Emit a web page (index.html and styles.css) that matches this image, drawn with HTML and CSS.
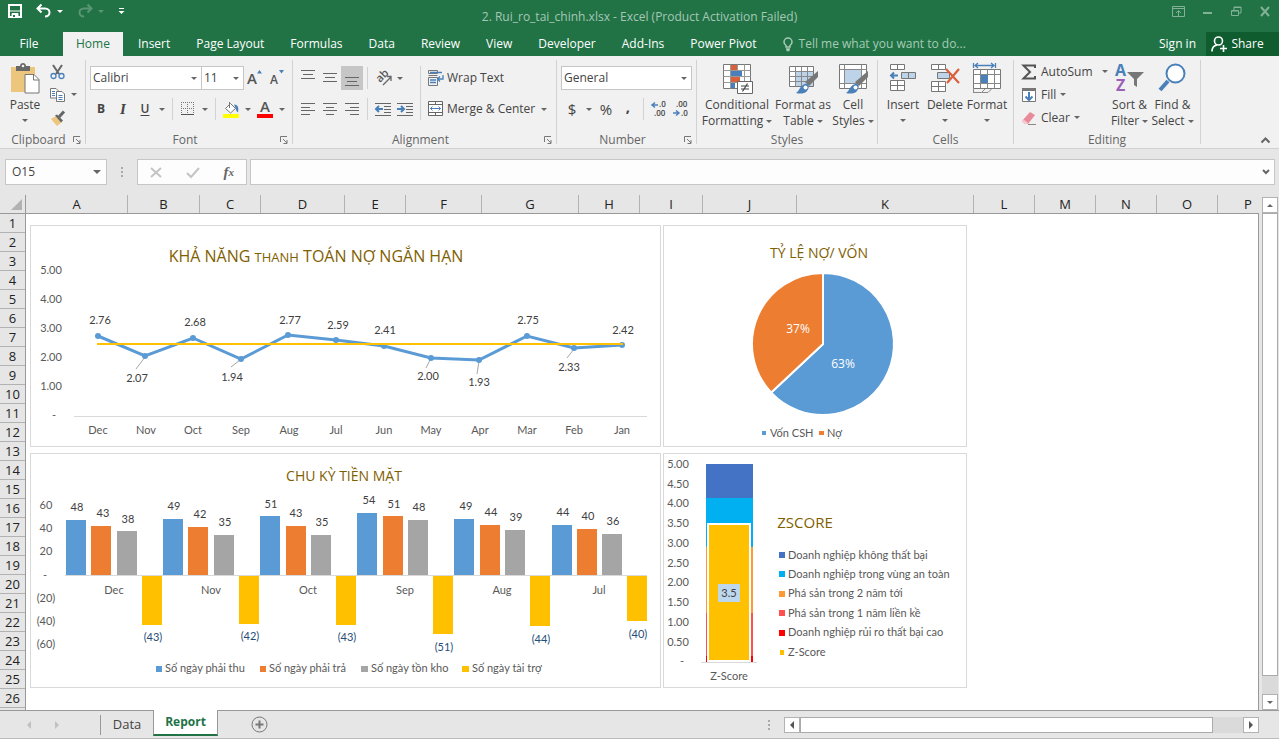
FILE: index.html
```html
<!DOCTYPE html>
<html lang="vi">
<head>
  <meta charset="UTF-8">
  <title>2. Rui_ro_tai_chinh.xlsx - Excel</title>
  <link rel="stylesheet" href="styles.css">
</head>
<body>
  <header class="titlebar">
    <div class="quick">
      <button class="qbtn" aria-label="Save"><svg width="14" height="14" viewBox="0 0 14 14"><path d="M1 1h12v12H1z" fill="none" stroke="#fff" stroke-width="2"/><path d="M2 7h10M4 9.5h6V13H4z" stroke="#fff" fill="#fff"/><path d="M5 11h2v2H5z" fill="#217346"/></svg></button>
      <button class="qbtn" aria-label="Undo"><svg width="16" height="14" viewBox="0 0 16 14"><path d="M5.500 0.500L1.500 4.500l4 4M2 4.500h7c6 0 6 8 0 8" fill="none" stroke="#fff" stroke-width="2"/></svg><i class="caret white"></i></button>
      <button class="qbtn dim" aria-label="Redo"><svg width="16" height="14" viewBox="0 0 16 14"><path d="M10.500 0.500l4 4-4 4M14 4.500H7c-6 0-6 8 0 8" fill="none" stroke="#fff" stroke-width="2"/></svg><i class="caret white"></i></button>
      <button class="qbtn" aria-label="Customize"><svg width="7" height="8" viewBox="0 0 7 8"><path d="M1 1.500h5" stroke="#fff"/><path d="M0.500 4h6l-3 3z" fill="#fff"/></svg></button>
    </div>
    <div class="doc-title">2. Rui_ro_tai_chinh.xlsx - Excel (Product Activation Failed)</div>
    <div class="window-btns">
      <button aria-label="Ribbon options"><svg width="13" height="11" viewBox="0 0 13 11"><path d="M.5.5h12v10H.5zM.5 2.500h12M6.500 10V5M4 7l2.500-2.500L9 7" fill="none" stroke="#82b197"/></svg></button>
      <button aria-label="Minimize"><svg width="10" height="11" viewBox="0 0 10 11"><path d="M0 7h9" stroke="#82b197" stroke-width="2"/></svg></button>
      <button aria-label="Restore"><svg width="11" height="11" viewBox="0 0 11 11"><path d="M.5 4.500h7v5h-7zM.5 5h7M3 4V1h7v6H8M3 1.500h7" fill="none" stroke="#82b197"/></svg></button>
      <button aria-label="Close"><svg width="10" height="11" viewBox="0 0 10 11"><path d="M1 1l8 9M9 1l-8 9" stroke="#82b197" stroke-width="2"/></svg></button>
    </div>
  </header>

  <nav class="tabs">
    <button class="tab file">File</button>
    <button class="tab active">Home</button>
    <button class="tab">Insert</button>
    <button class="tab">Page Layout</button>
    <button class="tab">Formulas</button>
    <button class="tab">Data</button>
    <button class="tab">Review</button>
    <button class="tab">View</button>
    <button class="tab">Developer</button>
    <button class="tab">Add-Ins</button>
    <button class="tab">Power Pivot</button>
    <button class="tab tell"><svg width="10" height="14" viewBox="0 0 10 14"><path d="M3 10V8.500C1.500 7.500 1 6.500 1 5a4 4 0 0 1 8 0c0 1.500-.5 2.500-2 3.500V10zM3 12h4M3.500 13.500h3" fill="none" stroke="#a6cbb5" stroke-width="1.500"/></svg>Tell me what you want to do...</button>
    <a class="signin" href="#">Sign in</a>
    <button class="share"><svg width="16" height="16" viewBox="0 0 16 16"><circle cx="7.500" cy="5" r="4" fill="none" stroke="#fff" stroke-width="1.600"/><path d="M1 15.500c0-4 2-6 5-6.500M9 12.500h7M12.500 9v7" fill="none" stroke="#fff" stroke-width="1.600"/></svg>Share</button>
  </nav>

  <section class="ribbon">
    <div class="group g-clipboard">
      <div class="group-body">
        <button class="big paste">
          <svg width="30" height="32" viewBox="0 0 30 32"><path d="M1 5h24v25H1z" fill="#edc67d"/><path d="M6 4h4c0-4 6-4 6 0h4v5H6z" fill="#686868"/><circle cx="13" cy="4" r="1.300" fill="#f1f1f1"/><path d="M15 12.500h9l5 5V31H15z" fill="#fff" stroke="#777"/><path d="M23.500 12.500V18H29" fill="none" stroke="#777"/></svg>
          <span>Paste</span><i class="caret"></i>
        </button>
        <div class="stack clip-stack">
          <button class="row-btn" aria-label="Cut"><svg width="15" height="16" viewBox="0 0 15 16"><path d="M3 1l6 9M12 1L6 10" stroke="#666" stroke-width="2"/><circle cx="3.500" cy="12" r="2.500" fill="none" stroke="#4a80ba" stroke-width="1.300"/><circle cx="11.500" cy="12" r="2.500" fill="none" stroke="#4a80ba" stroke-width="1.300"/></svg></button>
          <button class="row-btn" aria-label="Copy"><svg width="15" height="16" viewBox="0 0 15 16"><path d="M.5 1.500H6l2 2V11H.5z" fill="#fff" stroke="#777"/><path d="M6.500 4.500H12l2.500 2.500v7.500h-8z" fill="#fff" stroke="#777"/><path d="M2 4.500h3M2 6.500h3M2 8.500h3M8.500 8.500h4M8.500 10.500h4M8.500 12.500h4" stroke="#4a80ba"/></svg><i class="caret"></i></button>
          <button class="row-btn" aria-label="Format Painter"><svg width="16" height="16" viewBox="0 0 16 16"><path d="M1 9l5-3 6 6-5 4z" fill="#edc67d"/><path d="M5 5.500l2-1 6 6-2 2z" fill="#666"/><path d="M9 7l5-5.500" stroke="#666" stroke-width="3"/></svg></button>
        </div>
      </div>
      <div class="group-label">Clipboard<svg class="launcher" width="8" height="8" viewBox="0 0 8 8"><path d="M.5 6V.5H7M3 3l4 4M7 4v3.500H3.500" fill="none" stroke="#777"/></svg></div>
    </div>

    <div class="group g-font">
      <div class="group-body lines">
        <div class="line">
          <span class="combo font-name"><select aria-label="Font"><option>Calibri</option></select></span>
          <span class="combo font-size"><select aria-label="Font size"><option>11</option></select></span>
          <button class="ib" aria-label="Increase font size"><svg width="16" height="18" viewBox="0 0 16 18"><text x="0" y="15" class="t-a" font-size="15">A</text><path d="M10 4.500h5L12.500 1z" fill="#4a80ba"/></svg></button>
          <button class="ib" aria-label="Decrease font size"><svg width="16" height="18" viewBox="0 0 16 18"><text x="1" y="15" class="t-a" font-size="12">A</text><path d="M10 1h5l-2.500 3.500z" fill="#4a80ba"/></svg></button>
        </div>
        <div class="line">
          <button class="ib bold">B</button>
          <button class="ib italic">I</button>
          <button class="ib under">U</button>
          <button class="cb" aria-label="Underline options"><i class="caret"></i></button>
          <i class="sep"></i>
          <button class="ib" aria-label="Borders"><svg width="14" height="14" viewBox="0 0 14 14"><path d="M.5 0v13M6.500 0v13M12.500 0v13M0 .5h13M0 6.500h13" stroke="#777" stroke-dasharray="1 1"/><path d="M0 12.500h13" stroke="#555"/></svg></button>
          <button class="cb" aria-label="Border options"><i class="caret"></i></button>
          <i class="sep"></i>
          <button class="ib" aria-label="Fill color"><svg width="17" height="17" viewBox="0 0 17 17"><path d="M2.500 7.500l5-5 5 5-5 4.500z" fill="#fff" stroke="#777"/><path d="M6.500 7V1" stroke="#777"/><path d="M11 3.500c4 0 5 3 4 8-2-1-2-4-4-8z" fill="#4a80ba"/><path d="M0 13h16v4H0z" fill="#ff0"/></svg></button>
          <button class="cb" aria-label="Fill color options"><i class="caret"></i></button>
          <button class="ib" aria-label="Font color"><svg width="17" height="17" viewBox="0 0 17 17"><text x="3" y="11" class="t-a" font-size="15">A</text><path d="M0 13h16v4H0z" fill="#f00"/></svg></button>
          <button class="cb" aria-label="Font color options"><i class="caret"></i></button>
        </div>
      </div>
      <div class="group-label">Font<svg class="launcher" width="8" height="8" viewBox="0 0 8 8"><path d="M.5 6V.5H7M3 3l4 4M7 4v3.500H3.500" fill="none" stroke="#777"/></svg></div>
    </div>

    <div class="group g-align">
      <div class="group-body">
        <div class="lines">
          <div class="line">
            <button class="ib" aria-label="Top align"><svg width="14" height="18" viewBox="0 0 14 18"><path d="M0 1.500h14M2 5.500h10M0 9.500h14" stroke="#666"/></svg></button>
            <button class="ib" aria-label="Middle align"><svg width="14" height="18" viewBox="0 0 14 18"><path d="M0 4.500h14M2 8.500h10M0 12.500h14" stroke="#666"/></svg></button>
            <button class="ib pressed" aria-label="Bottom align"><svg width="14" height="18" viewBox="0 0 14 18"><path d="M0 8.500h14M2 12.500h10M0 16.500h14" stroke="#666"/></svg></button>
            <i class="sep"></i>
            <button class="ib" aria-label="Orientation"><svg width="17" height="16" viewBox="0 0 17 16"><text class="t-a" font-size="11" transform="translate(5 13) rotate(-45)">ab</text><path d="M8 15l8-8M12 6.500h4V11" fill="none" stroke="#666" stroke-width="1.300"/></svg></button>
            <button class="cb" aria-label="Orientation options"><i class="caret"></i></button>
          </div>
          <div class="line">
            <button class="ib" aria-label="Align left"><svg width="14" height="14" viewBox="0 0 14 14"><path d="M0 1.500h14M0 5.500h9M0 8.500h14M0 12.500h9" stroke="#666"/></svg></button>
            <button class="ib" aria-label="Center"><svg width="14" height="14" viewBox="0 0 14 14"><path d="M0 1.500h14M3 5.500h8M0 8.500h14M3 12.500h8" stroke="#666"/></svg></button>
            <button class="ib" aria-label="Align right"><svg width="14" height="14" viewBox="0 0 14 14"><path d="M0 1.500h14M5 5.500h9M0 8.500h14M5 12.500h9" stroke="#666"/></svg></button>
            <i class="sep"></i>
            <button class="ib" aria-label="Decrease indent"><svg width="16" height="14" viewBox="0 0 16 14"><path d="M0 1.500h16M9 4.500h7M9 7.500h7M9 10.500h7M0 13.500h16" stroke="#666"/><path d="M1 7h7M4 4L1 7l3 3" fill="none" stroke="#4a80ba" stroke-width="2"/></svg></button>
            <button class="ib" aria-label="Increase indent"><svg width="16" height="14" viewBox="0 0 16 14"><path d="M0 1.500h16M9 4.500h7M9 7.500h7M9 10.500h7M0 13.500h16" stroke="#666"/><path d="M0 7h7M4 4l3 3-3 3" fill="none" stroke="#4a80ba" stroke-width="2"/></svg></button>
          </div>
        </div>
        <i class="sep tall"></i>
        <div class="lines wrap-col">
          <button class="line text-btn"><svg width="16" height="16" viewBox="0 0 16 16"><path d="M.5.5h9v3h-9zM.5 7.500h9v8h-9zM.5 5.500h9" fill="none" stroke="#777"/><path d="M2 2.500h12M2 10h6M2 12.500h6M15 5v4h-5M12 6.500L9.500 9l2.500 2.500" fill="none" stroke="#4a80ba" stroke-width="1.300"/></svg>Wrap Text</button>
          <button class="line text-btn"><svg width="16" height="16" viewBox="0 0 16 16"><path d="M.5.5h14v14H.5zM.5 3.500h14M.5 11.500h14M7.500.5v3M7.500 11.500v3" fill="#fff" stroke="#666"/><path d="M2.500 7.500h10M4.500 5.500l-2 2 2 2M10.500 5.500l2 2-2 2" fill="none" stroke="#4a80ba"/></svg>Merge &amp; Center<i class="caret push"></i></button>
        </div>
      </div>
      <div class="group-label">Alignment<svg class="launcher" width="8" height="8" viewBox="0 0 8 8"><path d="M.5 6V.5H7M3 3l4 4M7 4v3.500H3.500" fill="none" stroke="#777"/></svg></div>
    </div>

    <div class="group g-number">
      <div class="group-body lines">
        <div class="line"><span class="combo number-format"><select aria-label="Number format"><option>General</option></select></span></div>
        <div class="line">
          <button class="ib sym">$</button>
          <button class="cb" aria-label="Currency options"><i class="caret"></i></button>
          <button class="ib sym">%</button>
          <button class="ib sym comma">,</button>
          <i class="sep"></i>
          <button class="ib" aria-label="Increase decimal"><svg width="16" height="16" viewBox="0 0 16 16"><text x="8" y="6" class="t-d">.0</text><text x="3" y="15" class="t-d">.00</text><path d="M1 4h6M4 1.500L1 4l3 2.500" fill="none" stroke="#4a80ba" stroke-width="1.500"/></svg></button>
          <button class="ib" aria-label="Decrease decimal"><svg width="16" height="16" viewBox="0 0 16 16"><text x="3" y="6" class="t-d">.00</text><text x="8" y="15" class="t-d">.0</text><path d="M0 12h6M3 9.500L6 12l-3 2.500" fill="none" stroke="#4a80ba" stroke-width="1.500"/></svg></button>
        </div>
      </div>
      <div class="group-label">Number<svg class="launcher" width="8" height="8" viewBox="0 0 8 8"><path d="M.5 6V.5H7M3 3l4 4M7 4v3.500H3.500" fill="none" stroke="#777"/></svg></div>
    </div>

    <div class="group g-styles">
      <div class="group-body">
        <button class="big w-cond">
          <svg width="32" height="32" viewBox="0 0 32 32"><path d="M2.500 2.500h27v24h-27z" fill="#fff" stroke="#777"/><path d="M2.500 8.500h27M2.500 14.500h27M2.500 20.500h27M9.500 2.500v24M16.500 2.500v24M23.500 2.500v24" stroke="#999"/><path d="M10 3h6v5h-6zM10 15h9v5h-9z" fill="#d9603b"/><path d="M10 9h11v5H10zM10 21h4v5h-4z" fill="#4a80ba"/><path d="M16.500 19.500h15v12h-15z" fill="#fff" stroke="#666"/><path d="M20 24h8M20 27h8M26.500 21.500l-5 8" stroke="#444" stroke-width="1.200"/></svg>
          <span>Conditional</span><span>Formatting<i class="caret"></i></span>
        </button>
        <button class="big w-table">
          <svg width="32" height="32" viewBox="0 0 32 32"><path d="M2.500 4.500h24v20h-24z" fill="#fff" stroke="#777"/><path d="M9 10h17v14H9z" fill="#bdd3ea"/><path d="M2.500 9.500h24M2.500 14.500h24M2.500 19.500h24M8.500 4.500v20M14.500 4.500v20M20.500 4.500v20" stroke="#888"/><path d="M31 9v6L22 24l-4-4z" fill="#777"/><path d="M9 31c3-1 4-8 9-9 4-1 5 4 2 7-2 3-8 3-11 2z" fill="#4a80ba"/><circle cx="18.500" cy="25.500" r="2" fill="#fff"/></svg>
          <span>Format as</span><span>Table<i class="caret"></i></span>
        </button>
        <button class="big w-cell">
          <svg width="32" height="32" viewBox="0 0 32 32"><path d="M2.500 2.500h27v24h-27z" fill="#fff" stroke="#777"/><path d="M8 8h16v13H8z" fill="#bdd3ea"/><path d="M2.500 7.500h27M2.500 21.500h27M7.500 2.500v24M24.500 2.500v24" stroke="#888"/><path d="M31 9v6L22 24l-4-4z" fill="#777"/><path d="M9 31c3-1 4-8 9-9 4-1 5 4 2 7-2 3-8 3-11 2z" fill="#4a80ba"/><circle cx="18.500" cy="25.500" r="2" fill="#fff"/></svg>
          <span>Cell</span><span>Styles<i class="caret"></i></span>
        </button>
      </div>
      <div class="group-label">Styles</div>
    </div>

    <div class="group g-cells">
      <div class="group-body">
        <button class="big w-cells">
          <svg width="30" height="32" viewBox="0 0 30 32"><path d="M2.500 2.500h14v5h-14zM9.500 2.500v5M2.500 18.500h14v10h-14zM2.500 23.500h14M9.500 18.500v10" fill="#fff" stroke="#777"/><path d="M13.500 10.500h14v6h-14zM20.500 10.500v6" fill="#bdd3ea" stroke="#777"/><path d="M3 13.500h7M6 10.500l-3 3 3 3" fill="none" stroke="#4a80ba" stroke-width="2"/></svg>
          <span>Insert</span><i class="caret"></i>
        </button>
        <button class="big w-cells">
          <svg width="30" height="32" viewBox="0 0 30 32"><path d="M1.500 2.500h14v5h-14zM8.500 2.500v5M1.500 19.500h14v10h-14zM1.500 24.500h14M8.500 19.500v10" fill="#fff" stroke="#777"/><path d="M7.500 10.500h12v6h-12z" fill="#bdd3ea" stroke="#777"/><path d="M16 7l13 14M29 7L17 21" stroke="#d9603b" stroke-width="2.200"/></svg>
          <span>Delete</span><i class="caret"></i>
        </button>
        <button class="big w-cells">
          <svg width="30" height="32" viewBox="0 0 30 32"><path d="M1.500 7.500h27v19h-27z" fill="#fff" stroke="#777"/><path d="M1.500 12.500h27M1.500 21.500h27M8.500 7.500v19M15.500 7.500v19M22.500 7.500v19M1.500 27v4M1.500 30.500h8l4-4M10 30.500h6l4-4" fill="none" stroke="#888"/><path d="M9 13h7v8H9z" fill="#4a80ba"/><path d="M1.500 1v5M23.500 1v5M3 3.500h19M6 1L3 3.500 6 6M19 1l3 2.500L19 6" fill="none" stroke="#4a80ba" stroke-width="1.300"/></svg>
          <span>Format</span><i class="caret"></i>
        </button>
      </div>
      <div class="group-label">Cells</div>
    </div>

    <div class="group g-editing">
      <div class="group-body">
        <div class="stack edit-stack">
          <button class="row-btn"><svg width="16" height="16" viewBox="0 0 16 16"><path d="M14 4V1.500H2.500L9 8l-6.500 6.500H14V12" fill="none" stroke="#555" stroke-width="2"/></svg>AutoSum<i class="caret push"></i></button>
          <button class="row-btn"><svg width="16" height="16" viewBox="0 0 16 16"><path d="M1.500 1.500h13v13h-13z" fill="#fff" stroke="#777"/><path d="M1 1h14v3H1z" fill="#777"/><path d="M8 5v8M4.500 9.500L8 13l3.500-3.500" fill="none" stroke="#4a80ba" stroke-width="2"/></svg>Fill<i class="caret"></i></button>
          <button class="row-btn"><svg width="16" height="16" viewBox="0 0 16 16"><path d="M1 11l8-9 5 3-7 9H4z" fill="#e98a9a"/><path d="M2 9l5 4-1 1H4l-3-3z" fill="#f7c9d0"/><path d="M7 14.500h8" stroke="#888"/></svg>Clear<i class="caret"></i></button>
        </div>
        <button class="big w-edit">
          <svg width="32" height="32" viewBox="0 0 32 32"><text x="1" y="14" class="t-z" fill="#4a80ba">A</text><text x="2" y="29" class="t-z" fill="#9c5fb8">Z</text><path d="M13 10h17l-7 7v8l-3-2v-6z" fill="#777"/></svg>
          <span>Sort &amp;</span><span>Filter<i class="caret"></i></span>
        </button>
        <button class="big w-edit">
          <svg width="32" height="32" viewBox="0 0 32 32"><path d="M11 19L3 28" stroke="#4a80ba" stroke-width="4"/><circle cx="18.500" cy="11.500" r="9" fill="#fff" stroke="#4a80ba" stroke-width="2"/></svg>
          <span>Find &amp;</span><span>Select<i class="caret"></i></span>
        </button>
      </div>
      <div class="group-label">Editing</div>
    </div>
    <button class="collapse" aria-label="Collapse ribbon"><svg width="9" height="6" viewBox="0 0 9 6"><path d="M.5 5.500l4-4 4 4" fill="none" stroke="#666" stroke-width="2"/></svg></button>
  </section>

  <section class="formula-bar">
    <span class="name-box"><input aria-label="Name box" value="O15"><i class="caret"></i></span>
    <svg class="grip" width="4" height="12" viewBox="0 0 4 12"><path d="M1 1h2v2H1zM1 5h2v2H1zM1 9h2v2H1z" fill="#aaa"/></svg>
    <div class="fx">
      <button aria-label="Cancel"><svg width="12" height="11" viewBox="0 0 12 11"><path d="M1 1l10 9M11 1L1 10" stroke="#c4c4c4" stroke-width="2"/></svg></button>
      <button aria-label="Enter"><svg width="14" height="11" viewBox="0 0 14 11"><path d="M1 6l4 4 8-9" fill="none" stroke="#c4c4c4" stroke-width="2"/></svg></button>
      <button class="fn" aria-label="Insert function">f<sub>x</sub></button>
    </div>
    <span class="formula"><input aria-label="Formula"><svg width="8" height="6" viewBox="0 0 8 6"><path d="M1 1l3 3 3-3" fill="none" stroke="#666" stroke-width="2"/></svg></span>
  </section>

  <main class="sheet">
    <div class="corner"><svg width="11" height="11" viewBox="0 0 11 11"><path d="M11 0v11H0z" fill="#b2b2b2"/></svg></div>
    <div class="cols">
      <span class="c102">A</span><span class="c72">B</span><span class="c61">C</span><span class="c84">D</span><span class="c61">E</span><span class="c76">F</span><span class="c97">G</span><span class="c61">H</span><span class="c63">I</span><span class="c94">J</span><span class="c177">K</span><span class="c61">L</span><span class="c61">M</span><span class="c61">N</span><span class="c61">O</span><span class="c61">P</span>
    </div>
    <div class="rows">
      <span>1</span><span>2</span><span>3</span><span>4</span><span>5</span><span>6</span><span>7</span><span>8</span><span>9</span><span>10</span><span>11</span><span>12</span><span>13</span><span>14</span><span>15</span><span>16</span><span>17</span><span>18</span><span>19</span><span>20</span><span>21</span><span>22</span><span>23</span><span>24</span><span>25</span><span>26</span><span></span>
    </div>
    <div class="cells">
      <div class="charts">
        <!-- current ratio -->
        <svg class="chart" viewBox="0 0 631 222">
          <text x="286" y="37" class="title lg">KHẢ NĂNG <tspan class="sm">THANH</tspan> TOÁN NỢ NGẮN HẠN</text>
          <g class="axis">
            <text x="21" y="49">5.00</text><text x="21" y="78">4.00</text><text x="21" y="107">3.00</text><text x="21" y="136">2.00</text><text x="21" y="165">1.00</text><text x="24" y="194">-</text>
          </g>
          <path class="base" d="M44 191.500h573"/>
          <path class="leader" d="M115 132l-9 12M210 135l-9 7M401 133l-5 10M449 136l-2 13M544 124l-7 9"/>
          <polyline class="ratio" points="68,111 115,131 163,113 211,134 258,110 306,115 354,121 401,133 449,135 497,111 544,123 592,120"/>
          <g class="dots">
            <circle cx="68" cy="111" r="3"/><circle cx="115" cy="131" r="3"/><circle cx="163" cy="113" r="3"/><circle cx="211" cy="134" r="3"/><circle cx="258" cy="110" r="3"/><circle cx="306" cy="115" r="3"/><circle cx="354" cy="121" r="3"/><circle cx="401" cy="133" r="3"/><circle cx="449" cy="135" r="3"/><circle cx="497" cy="111" r="3"/><circle cx="544" cy="123" r="3"/><circle cx="592" cy="120" r="3"/>
          </g>
          <path class="average" d="M67 119h526"/>
          <g class="value">
            <text x="70" y="99">2.76</text><text x="107" y="157">2.07</text><text x="165" y="101">2.68</text><text x="202" y="156">1.94</text><text x="260" y="99">2.77</text><text x="308" y="104">2.59</text><text x="355" y="109">2.41</text><text x="398" y="155">2.00</text><text x="449" y="161">1.93</text><text x="498" y="99">2.75</text><text x="539" y="146">2.33</text><text x="593" y="109">2.42</text>
          </g>
          <g class="axis">
            <text x="68" y="209">Dec</text><text x="116" y="209">Nov</text><text x="163" y="209">Oct</text><text x="211" y="209">Sep</text><text x="259" y="209">Aug</text><text x="306" y="209">Jul</text><text x="354" y="209">Jun</text><text x="401" y="209">May</text><text x="450" y="209">Apr</text><text x="497" y="209">Mar</text><text x="544" y="209">Feb</text><text x="592" y="209">Jan</text>
          </g>
        </svg>

        <!-- debt / equity -->
        <svg class="chart" viewBox="-1 -1 304 222">
          <text x="155" y="32" class="title">TỶ LỆ NỢ/ VỐN</text>
          <path class="slice" fill="#5b9bd5" d="M159 118V47a71 71 0 1 1-51.800 119.600z"/>
          <path class="slice" fill="#ed7d31" d="M159 118l-51.800 48.600A71 71 0 0 1 159 47z"/>
          <g class="pct"><text x="134" y="107">37%</text><text x="179" y="142">63%</text></g>
          <g class="legend">
            <path fill="#5b9bd5" d="M98 205h4v4h-4z"/><text x="106" y="211">Vốn CSH</text>
            <path fill="#ed7d31" d="M155 205h5v4h-5z"/><text x="163" y="211">Nợ</text>
          </g>
        </svg>

        <!-- cash cycle -->
        <svg class="chart" viewBox="-1 0 631 235">
          <text x="313" y="28" class="title">CHU KỲ TIỀN MẶT</text>
          <g class="axis">
            <text x="15" y="56">60</text><text x="15" y="79">40</text><text x="15" y="102">20</text><text x="14" y="126">-</text><text x="15" y="149">(20)</text><text x="15" y="172">(40)</text><text x="15" y="195">(60)</text>
          </g>
          <path fill="#5b9bd5" d="M35 67h20v55h-20zM132 66h20v56h-20zM229 63h20v59h-20zM326 60h20v62h-20zM423 66h20v56h-20zM521 72h20v50h-20z"/>
          <path fill="#ed7d31" d="M60 73h20v49h-20zM157 74h20v48h-20zM255 73h20v49h-20zM352 63h20v59h-20zM449 72h20v50h-20zM546 76h20v46h-20z"/>
          <path fill="#a5a5a5" d="M86 78h20v44h-20zM183 82h20v40h-20zM280 82h20v40h-20zM377 67h20v55h-20zM474 77h20v45h-20zM571 81h20v41h-20z"/>
          <path fill="#ffc000" d="M111 122h20v50h-20zM208 122h20v49h-20zM305 122h20v50h-20zM402 122h20v59h-20zM499 122h20v51h-20zM596 122h20v46h-20z"/>
          <path class="base" d="M34 122.500h582"/>
          <g class="value">
            <text x="46" y="58">48</text><text x="72" y="64">43</text><text x="97" y="70">38</text>
            <text x="143" y="57">49</text><text x="169" y="65">42</text><text x="194" y="73">35</text>
            <text x="240" y="55">51</text><text x="265" y="64">43</text><text x="291" y="73">35</text>
            <text x="338" y="51">54</text><text x="363" y="55">51</text><text x="388" y="58">48</text>
            <text x="435" y="57">49</text><text x="460" y="63">44</text><text x="485" y="68">39</text>
            <text x="532" y="63">44</text><text x="557" y="67">40</text><text x="582" y="72">36</text>
          </g>
          <g class="value negative">
            <text x="122" y="188">(43)</text><text x="219" y="187">(42)</text><text x="316" y="188">(43)</text><text x="413" y="198">(51)</text><text x="510" y="190">(44)</text><text x="607" y="185">(40)</text>
          </g>
          <g class="axis">
            <text x="83" y="141">Dec</text><text x="180" y="141">Nov</text><text x="277" y="141">Oct</text><text x="374" y="141">Sep</text><text x="471" y="141">Aug</text><text x="568" y="141">Jul</text>
          </g>
          <g class="legend">
            <path fill="#5b9bd5" d="M125 213h6v6h-6z"/><text x="134" y="219">Số ngày phải thu</text>
            <path fill="#ed7d31" d="M229 213h6v6h-6z"/><text x="238" y="219">Số ngày phải trả</text>
            <path fill="#a5a5a5" d="M330 213h7v6h-7z"/><text x="340" y="219">Số ngày tồn kho</text>
            <path fill="#ffc000" d="M431 213h7v6h-7z"/><text x="441" y="219">Số ngày tài trợ</text>
          </g>
        </svg>

        <!-- z-score -->
        <svg class="chart" viewBox="0 0 304 235">
          <g class="axis">
            <text x="15" y="15">5.00</text><text x="15" y="35">4.50</text><text x="15" y="54">4.00</text><text x="15" y="74">3.50</text><text x="15" y="94">3.00</text><text x="15" y="114">2.50</text><text x="15" y="133">2.00</text><text x="15" y="153">1.50</text><text x="15" y="173">1.00</text><text x="15" y="193">0.50</text><text x="19" y="212">-</text><text x="66" y="227">Z-Score</text>
          </g>
          <path fill="#4472c4" d="M43 11h47v34H43z"/>
          <path fill="#00b0f0" d="M43 45h47v49H43z"/>
          <path fill="#ff9933" d="M43 94h47v66H43z"/>
          <path fill="#ff5050" d="M43 160h47v43H43z"/>
          <path fill="#f00" d="M43 203h47v6H43z"/>
          <path fill="#ffc000" stroke="#fff" stroke-width="2" d="M45 71h42v137H45z"/>
          <path class="base" d="M38 209.500h56"/>
          <path fill="#bdd7ee" d="M55 131h22v18H55z"/>
          <text x="66" y="144" class="value">3.5</text>
          <text x="142" y="75" class="title z">ZSCORE</text>
          <g class="legend">
            <path fill="#4472c4" d="M116 99h6v6h-6z"/><text x="125" y="106">Doanh nghiệp không thất bại</text>
            <path fill="#00b0f0" d="M116 118h6v6h-6z"/><text x="125" y="125">Doanh nghiệp trong vùng an toàn</text>
            <path fill="#ff9933" d="M116 138h6v6h-6z"/><text x="125" y="144">Phá sản trong 2 năm tới</text>
            <path fill="#ff5050" d="M116 157h6v6h-6z"/><text x="125" y="164">Phá sản trong 1 năm liền kề</text>
            <path fill="#f00" d="M116 177h6v6h-6z"/><text x="125" y="183">Doanh nghiệp rủi ro thất bại cao</text>
            <path fill="#ffc000" d="M117 197h4v5h-4z"/><text x="125" y="203">Z-Score</text>
          </g>
        </svg>
      </div>
    </div>
    <div class="vscroll">
      <button class="sb" aria-label="Scroll up"><i class="caret up"></i></button>
      <div class="vthumb"></div>
      <button class="sb last" aria-label="Scroll down"><i class="caret"></i></button>
    </div>
  </main>

  <footer class="sheets">
    <div class="nav-arrows"><i class="tri left"></i><i class="tri right"></i></div>
    <button class="sheet-tab">Data</button>
    <button class="sheet-tab current">Report</button>
    <button class="add" aria-label="New sheet"><svg width="17" height="17" viewBox="0 0 17 17"><circle cx="8.500" cy="8.500" r="7.500" fill="none" stroke="#777"/><path d="M8.500 4.500v8M4.500 8.500h8" stroke="#777" stroke-width="2"/></svg></button>
    <svg class="grip push" width="4" height="12" viewBox="0 0 4 12"><path d="M1 1h2v2H1zM1 5h2v2H1zM1 9h2v2H1z" fill="#aaa"/></svg>
    <div class="hscroll">
      <button class="sb" aria-label="Scroll left"><i class="tri left dark"></i></button>
      <div class="hthumb"></div>
      <button class="sb last" aria-label="Scroll right"><i class="tri right dark"></i></button>
    </div>
  </footer>
</body>
</html>
```
FILE: styles.css
```css
* {
  box-sizing: border-box;
}
body {
  margin: 0;
  height: 100vh;
  display: flex;
  flex-direction: column;
  overflow: hidden;
  background: #e6e6e6;
  color: #444;
  font: 12px/16px "Open Sans", "Noto Sans", sans-serif;
}
button, input, select {
  font: inherit;
  color: inherit;
  background: none;
  border: 0;
  padding: 0;
  margin: 0;
  border-radius: 0;
  outline: none;
}
button {
  display: flex;
  align-items: center;
  justify-content: center;
  white-space: nowrap;
}
svg {
  display: block;
  flex: none;
  overflow: visible;
}

.caret {
  display: inline-block;
  flex: none;
  border: 3px solid transparent;
  border-top-color: #666;
  border-bottom: 0;
}
.caret.white {
  border-top-color: #fff;
}
.caret.up {
  border-top: 0;
  border-bottom: 3px solid #666;
}
.push {
  margin-left: auto;
}

/* title bar */
.titlebar {
  display: grid;
  grid-template-columns: 1fr auto 1fr;
  height: 32px;
  background: #217346;
}
.quick {
  display: flex;
  height: 22px;
  padding-left: 8px;
  gap: 14px;
}
.qbtn {
  gap: 5px;
}
.qbtn.dim {
  opacity: .25;
}
.doc-title {
  line-height: 34px;
  color: #a6c7b5;
}
.window-btns {
  display: flex;
  justify-content: flex-end;
  gap: 18px;
  height: 22px;
  padding-right: 9px;
}

/* ribbon tabs */
.tabs {
  display: flex;
  height: 24px;
  background: #217346;
  color: #fff;
}
.tab {
  padding: 0 13px;
}
.tab.file {
  width: 63px;
  padding-right: 18px;
}
.tab.active {
  margin-right: 2px;
  background: #f1f1f1;
  color: #217346;
}
.tab.tell {
  gap: 6px;
  color: #a6cbb5;
}
.signin {
  margin-left: auto;
  padding: 0 10px;
  line-height: 24px;
  color: #fff;
  text-decoration: none;
}
.share {
  width: 73px;
  gap: 4px;
  padding-right: 10px;
  background: #0f5c2f;
}

/* ribbon */
.ribbon {
  display: flex;
  flex: none;
  height: 93px;
  padding: 4px 0;
  background: #f1f1f1;
  border-bottom: 1px solid #d2d2d2;
}
.group {
  display: flex;
  flex-direction: column;
  flex: none;
  border-right: 1px solid #d2d2d2;
}
.g-clipboard { width: 86px; }
.g-font { width: 207px; }
.g-align { width: 264px; }
.g-number { width: 140px; }
.g-styles { width: 181px; }
.g-cells { width: 136px; }
.g-editing { width: 187px; }
.group-body {
  display: flex;
  flex: 1;
  padding: 0 4px;
}
/* the launcher takes room on the right, so the caption sits left of centre */
.group-label {
  display: flex;
  justify-content: space-between;
  height: 8px;
  padding: 0 4px;
  line-height: 8px;
  color: #666;
}
.group-label::before {
  content: "";
}
.group-label:not(:has(.launcher))::after {
  content: "";
}
.g-font .group-label,
.g-align .group-label,
.g-number .group-label {
  padding-right: 4px;
}
.big {
  flex-direction: column;
  justify-content: flex-start;
  padding-top: 2px;
}
.big svg {
  margin-bottom: 3px;
}
.big > .caret {
  margin-top: 6px;
}
.big span {
  display: flex;
  align-items: center;
  gap: 3px;
}
.paste { width: 42px; }
.w-cond { width: 72px; }
.w-table { width: 60px; }
.w-cell { width: 40px; }
.w-cells { width: 42px; }
.w-edit { width: 43px; }
.stack {
  display: flex;
  flex-direction: column;
}
.row-btn {
  height: 23px;
  gap: 4px;
  justify-content: flex-start;
}
.clip-stack {
  width: 32px;
  padding-left: 4px;
}
.clip-stack .row-btn {
  gap: 6px;
}
.edit-stack {
  width: 90px;
  padding-left: 3px;
}
.lines {
  display: flex;
  flex-direction: column;
  gap: 7px;
  padding-top: 6px;
}
.group-body.lines {
  padding-top: 6px;
}
.line {
  display: flex;
  align-items: center;
  height: 24px;
}
.ib {
  width: 22px;
  height: 24px;
}
.cb {
  width: 12px;
  height: 24px;
}
.pressed {
  background: #c6c6c6;
}
.bold {
  font-weight: 700;
}
.italic {
  font-family: "Liberation Serif", serif;
  font-size: 15px;
  font-style: italic;
  font-weight: 700;
}
.under {
  font-weight: 600;
  text-decoration: underline;
  text-underline-offset: 2px;
}
.sep {
  width: 1px;
  height: 22px;
  margin: 0 4px;
  background: #d2d2d2;
}
.sep.tall {
  height: 54px;
  margin: 6px 7px 0 4px;
}
.combo {
  display: flex;
  align-items: center;
  height: 24px;
  background: #fff;
  border: 1px solid #c6c6c6;
}
.combo select {
  flex: 1;
  height: 22px;
  padding-left: 2px;
  appearance: none;
}
.combo::after {
  content: "";
  margin-right: 4px;
  border: 3px solid transparent;
  border-top-color: #666;
  border-bottom: 0;
}
.combo + .combo {
  border-left: 0;
}
.font-name { width: 112px; }
.font-size { width: 42px; }
.number-format { width: 131px; }
.wrap-col {
  flex: 1;
}
.text-btn {
  gap: 3px;
  justify-content: flex-start;
}
.text-btn .caret {
  margin-right: 5px;
}
.sym {
  font-size: 15px;
}
.comma {
  padding-bottom: 6px;
  font-weight: 700;
}
.t-a {
  font-weight: 600;
  fill: #555;
}
.t-d {
  font-size: 8px;
  font-weight: 600;
  fill: #444;
}
.t-z {
  font-size: 16px;
  font-weight: 700;
}
.collapse {
  align-self: flex-end;
  margin-left: auto;
  padding: 0 9px 1px;
}

/* formula bar */
.formula-bar {
  display: flex;
  align-items: center;
  flex: none;
  height: 46px;
  padding: 0 4px 0 5px;
}
.name-box, .fx, .formula {
  display: flex;
  align-items: center;
  height: 26px;
  background: #fdfdfd;
  border: 1px solid #c6c6c6;
}
.name-box {
  width: 102px;
  padding: 0 5px 0 6px;
}
.name-box input {
  flex: 1;
  min-width: 0;
}
.name-box .caret {
  border-width: 4px 4px 0;
}
.formula-bar .grip {
  margin: 0 13px;
}
.fx {
  width: 110px;
  justify-content: space-between;
  padding: 0 12px;
}
.fn {
  font: italic 700 15px/16px "Liberation Serif", serif;
  color: #666;
}
.fn sub {
  font-size: 11px;
}
.formula {
  flex: 1;
  margin-left: 3px;
  padding: 0 4px;
}
.formula input {
  flex: 1;
}

/* sheet */
.sheet {
  display: grid;
  grid-template: 19px minmax(0, 1fr) / 26px minmax(0, 1fr) 20px;
  flex: 1;
  min-height: 0;
  font-size: 13px;
  color: #222;
}
.corner {
  display: flex;
  align-items: flex-end;
  justify-content: flex-end;
  padding: 0 3px 3px 0;
  border-right: 1px solid #999;
  border-bottom: 1px solid #999;
}
.cols {
  display: flex;
  overflow: hidden;
  border-bottom: 1px solid #999;
}
.cols span {
  flex: none;
  line-height: 18px;
  text-align: center;
  border-right: 1px solid #b2b2b2;
}
.c61 { width: 61px; }
.c63 { width: 63px; }
.c72 { width: 72px; }
.c76 { width: 76px; }
.c84 { width: 84px; }
.c94 { width: 94px; }
.c97 { width: 97px; }
.c102 { width: 102px; }
.c177 { width: 177px; }
.rows {
  grid-row: 2;
  display: flex;
  flex-direction: column;
  overflow: hidden;
  border-right: 1px solid #999;
}
.rows span {
  flex: none;
  height: 19px;
  line-height: 19px;
  text-align: center;
  border-bottom: 1px solid #b2b2b2;
}
.cells {
  grid-row: 2;
  overflow: hidden;
  background: #fff;
  border-right: 1px solid #999;
  padding: 11px 4px;
}
.charts {
  display: grid;
  grid-template-columns: 631fr 304fr;
  gap: 6px 2px;
  max-width: 937px;
}
.chart {
  width: 100%;
  outline: 1px solid #d9d9d9;
  outline-offset: -1px;
}
.vscroll {
  grid-column: 3;
  grid-row: 1 / 3;
  display: flex;
  flex-direction: column;
  margin: 2px 1px 0 3px;
  background: #dadada;
}
.sb {
  flex: none;
  width: 16px;
  height: 16px;
  background: #fff;
  border: 1px solid #b2b2b2;
}
.vthumb {
  flex: 1;
  background: #fff;
  border: 1px solid #ababab;
}
.vscroll .last {
  margin-top: 18px;
}

/* charts */
.chart text {
  font-family: Lato, "Open Sans", sans-serif;
  font-size: 11px;
}
.chart .title {
  font-family: "Open Sans", sans-serif;
  font-size: 14px;
  fill: #7f6000;
  text-anchor: middle;
}
.chart .title.lg {
  font-size: 16px;
}
.chart .title.z {
  font-size: 15px;
}
.title .sm {
  font-size: 13px;
}
.axis text {
  fill: #595959;
  text-anchor: middle;
}
.value, .value text {
  fill: #404040;
  text-anchor: middle;
}
.negative text {
  fill: #1f4e79;
}
.legend text {
  fill: #595959;
}
.chart .pct text {
  font-family: "Open Sans", sans-serif;
  font-size: 12px;
  fill: #fff;
  text-anchor: middle;
}
.base {
  stroke: #d9d9d9;
}
.leader {
  fill: none;
  stroke: #a6a6a6;
}
.ratio {
  fill: none;
  stroke: #5b9bd5;
  stroke-width: 3;
}
.dots {
  fill: #5b9bd5;
}
.average {
  stroke: #ffc000;
  stroke-width: 2;
}
.slice {
  stroke: #fff;
  stroke-width: 2;
}

/* sheet tabs */
.sheets {
  display: flex;
  align-items: center;
  flex: none;
  height: 29px;
  padding-right: 20px;
  border-top: 1px solid #999;
  border-bottom: 1px solid #bbb;
}
.nav-arrows {
  display: flex;
  gap: 24px;
  width: 101px;
  height: 20px;
  align-items: center;
  padding-left: 27px;
  border-right: 1px solid #999;
}
.tri {
  border: 4px solid transparent;
}
.tri.left {
  border-left: 0;
  border-right-color: #c0c0c0;
}
.tri.right {
  border-right: 0;
  border-left-color: #c0c0c0;
}
.tri.left.dark {
  border-right-color: #555;
}
.tri.right.dark {
  border-left-color: #555;
}
.sheet-tab {
  align-self: flex-start;
  width: 52px;
  height: 25px;
  font-size: 13px;
}
.sheet-tab.current {
  width: 65px;
  margin-top: -1px;
  height: 26px;
  background: #fff;
  border: 1px solid #999;
  border-top: 0;
  border-bottom: 2px solid #217346;
  color: #217346;
  font-size: 12px;
  font-weight: 700;
}
.add {
  margin-left: 33px;
}
.hscroll {
  display: flex;
  width: 475px;
  margin-left: 13px;
  background: #dadada;
}
.hthumb {
  flex: 1;
  background: #fff;
  border: 1px solid #ababab;
}
.hscroll .last {
  margin-left: 30px;
}
```
